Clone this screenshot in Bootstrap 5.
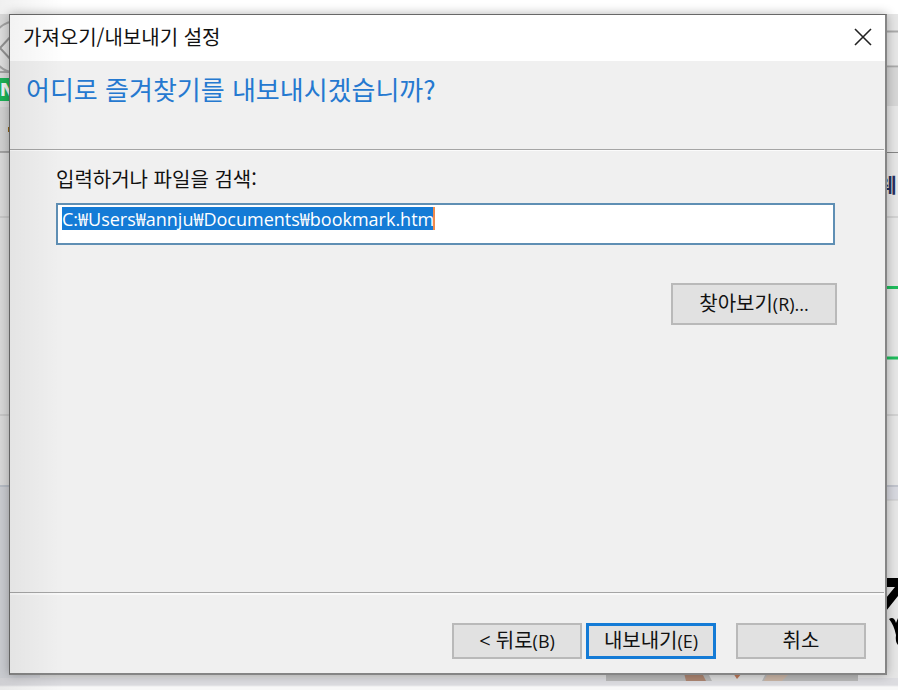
<!DOCTYPE html>
<html lang="ko">
<head>
<meta charset="utf-8">
<meta name="viewport" content="width=device-width, initial-scale=1">
<title>가져오기/내보내기 설정</title>
<link href="https://cdn.jsdelivr.net/npm/bootstrap@5.3.0/dist/css/bootstrap.min.css" rel="stylesheet">
<style>
  body { font-family: "Open Sans", "Noto Sans CJK KR", sans-serif; font-size: 20px; line-height: 24px; color: #111; background: #fff; }
  .stage { padding: 14px 11px 15px 9px; isolation: isolate; }
  .backdrop-page { z-index: -1; inset: 14px 0 0 0; background: #e1e1e1; }
  .edge-art { top: 0; height: 676px; }
  .edge-foot { bottom: 0; height: 12px; background: linear-gradient(#dcdce0 0 7px, #f8f8f8 9px); }
  .photo-art { right: 40px; bottom: 9px; }
  .left-shade { inset: 0 auto 0 0; width: 64px; background: linear-gradient(90deg, rgba(0,0,0,.06), transparent); pointer-events: none; }
  .wizard { background: #f0f0f0; border: 1px solid #686868; border-right: 2px solid #858585; border-bottom: 2px solid #858585; box-shadow: 0 0 10px rgba(0,0,0,.3); }
  .title-strip { height: 46px; padding: 0 13px 2px; background: #fff; }
  .kr { font-family: "Noto Sans CJK KR", sans-serif; }
  .close-btn { line-height: 0; }
  .headline { height: 89px; padding: 12px 16px; border-bottom: 1px solid #a5a5a5; box-shadow: 0 1px #fbfbfb; margin-right: 1px; }
  .headline h1 { font-size: 26px; line-height: 32px; color: #2579d0; font-weight: 400; }
  .fields { padding: 17px 50px 0 46px; }
  .path-box { height: 42px; padding: 0 4px 12px; border: 2px solid #5f8fb4; color: #111; font-family: "Open Sans", "Noto Sans CJK KR", sans-serif; font-size: 18px; outline: 0; background: #fff; }
  .path-box::selection { background: transparent; color: #fff; }
  .path-box.all-selected { background: linear-gradient(90deg, #147bd6 371px, #f08a4b 371px) 4px 2px / 373px 23px no-repeat #fff; }
  .win-btn { height: 36px; width: 130px; padding: 0; border: 2px solid #b9b9b9; background: #e1e1e1; color: #111; line-height: 30px; }
  .win-btn.browse { width: 166px; height: 42px; line-height: 36px; }
  .win-btn.primary { border: 3px solid #147bd6; line-height: 28px; }
  .key { font-size: 18px; }
  .browse-row { margin: 38px -2px 0 0; }
  .actions { height: 81px; padding: 30px 18px 0; border-top: 1px solid #a5a5a5; box-shadow: inset 0 2px #f9f9f9; margin-right: 1px; }
</style>
<script src="https://cdn.jsdelivr.net/npm/bootstrap@5.3.0/dist/js/bootstrap.bundle.min.js"></script>
</head>
<body>
<div class="stage position-relative d-flex min-vh-100 overflow-hidden">
  <div class="backdrop-page position-absolute" aria-hidden="true">
    <svg class="edge-art position-absolute start-0" width="40" height="676">
      <rect width="40" height="472" fill="#e4e4e4"/>
      <circle cx="17" cy="33" r="26" fill="#e9e9e9" stroke="#aaa" stroke-width="2"/>
      <path d="M13 20L0 34L13 48" fill="none" stroke="#999" stroke-width="2"/>
      <path d="M0 58H40" stroke="#aaa" stroke-width="2"/>
      <rect y="64" width="40" height="23" fill="#1ebc5b"/>
      <text x="0" y="82" font-size="18" font-weight="800" fill="#fff">N</text>
      <rect y="93" width="40" height="45" fill="#dcdcdc"/>
      <path d="M9 113v5" stroke="#9b6b19" stroke-width="2"/>
      <path d="M0 138H40" stroke="#777" stroke-width="1"/>
      <path d="M0 203H40" stroke="#d2d2d2" stroke-width="2"/>
      <path d="M0 401H40" stroke="#d2d2d2" stroke-width="2"/>
      <rect y="472" width="40" height="204" fill="#d5d7dc"/>
      <path d="M0 472H40" stroke="#c0c6cf" stroke-width="2"/>
    </svg>
    <svg class="edge-art position-absolute end-0" width="40" height="676">
      <rect width="40" height="676" fill="#e6e6e6"/>
      <path d="M0 17.5H40M0 52.5H40" stroke="#aaa" stroke-width="2"/>
      <rect y="54" width="40" height="38" fill="#d6d6d6"/>
      <path d="M0 138.5H40" stroke="#858585" stroke-width="1"/>
      <text class="kr" x="20" y="179" font-size="20" font-weight="700" fill="#26315e">웨</text>
      <path d="M0 203H40M0 401H40" stroke="#d2d2d2" stroke-width="2"/>
      <path d="M0 273.500H40M0 344H40" stroke="#1fbc5c" stroke-width="3"/>
      <rect y="472" width="40" height="14" fill="#d7d8df"/>
      <path d="M0 472H40" stroke="#c0c3cc" stroke-width="2"/>
      <path d="M0 486H40" stroke="#c8c8c8"/>
      <path d="M26 564H40V582L28 597V584L37 573H26Z" fill="#000"/>
      <path d="M31 605Q36 602 38 609L40 604V631Q37 628 38 621Q36 611 31 605Z" fill="#000"/>
    </svg>
    <div class="edge-foot position-absolute start-0 end-0"></div>
    <svg class="photo-art position-absolute" width="252" height="8">
      <rect width="252" height="8" fill="#b8b8b8"/>
      <path d="M78 0H96L100 8H80Z" fill="#ad8672"/>
      <path d="M102 0H160L156 8H106Z" fill="#dedede"/>
      <path d="M127 0H136L131 6Z" fill="#bd7959"/>
      <path d="M162 0H184L176 8H158Z" fill="#c9b5a6"/>
    </svg>
  </div>

  <main class="wizard d-flex flex-column flex-grow-1" role="dialog" aria-labelledby="wizard-title">
    <header class="title-strip d-flex align-items-center justify-content-between">
      <span id="wizard-title" class="kr">가져오기/내보내기 설정</span>
      <button type="button" class="close-btn btn p-0 border-0" aria-label="닫기">
        <svg width="18" height="18" viewBox="0 0 18 18"><path d="M1 1L17 17M17 1L1 17" fill="none" stroke="#222" stroke-width="1.6"/></svg>
      </button>
    </header>
    <div class="headline"><h1 class="kr m-0">어디로 즐겨찾기를 내보내시겠습니까?</h1></div>
    <section class="fields flex-grow-1">
      <label for="path" class="kr d-block mb-2 pb-1">입력하거나 파일을 검색:</label>
      <input id="path" type="text" class="path-box all-selected d-block w-100 rounded-0" value="C:₩Users₩annju₩Documents₩bookmark.htm" spellcheck="false">
      <div class="browse-row d-flex justify-content-end">
        <button type="button" class="win-btn browse btn rounded-0 fs-5">찾아보기<span class="key">(R)...</span></button>
      </div>
    </section>
    <footer class="actions d-flex justify-content-end">
      <button type="button" class="win-btn btn rounded-0 fs-5 me-1">&lt; 뒤로<span class="key">(B)</span></button>
      <button type="button" class="win-btn primary btn rounded-0 fs-5 me-3">내보내기<span class="key">(E)</span></button>
      <button type="button" class="win-btn btn rounded-0 fs-5 ms-1">취소</button>
    </footer>
  </main>
  <div class="left-shade position-absolute"></div>
</div>
<script>
  const path = document.getElementById('path');
  path.focus();
  path.select();
  const sync = () => path.classList.toggle('all-selected',
    path.selectionStart === 0 && path.selectionEnd === path.value.length);
  document.addEventListener('selectionchange', sync);
  path.addEventListener('input', sync);
</script>
</body>
</html>
